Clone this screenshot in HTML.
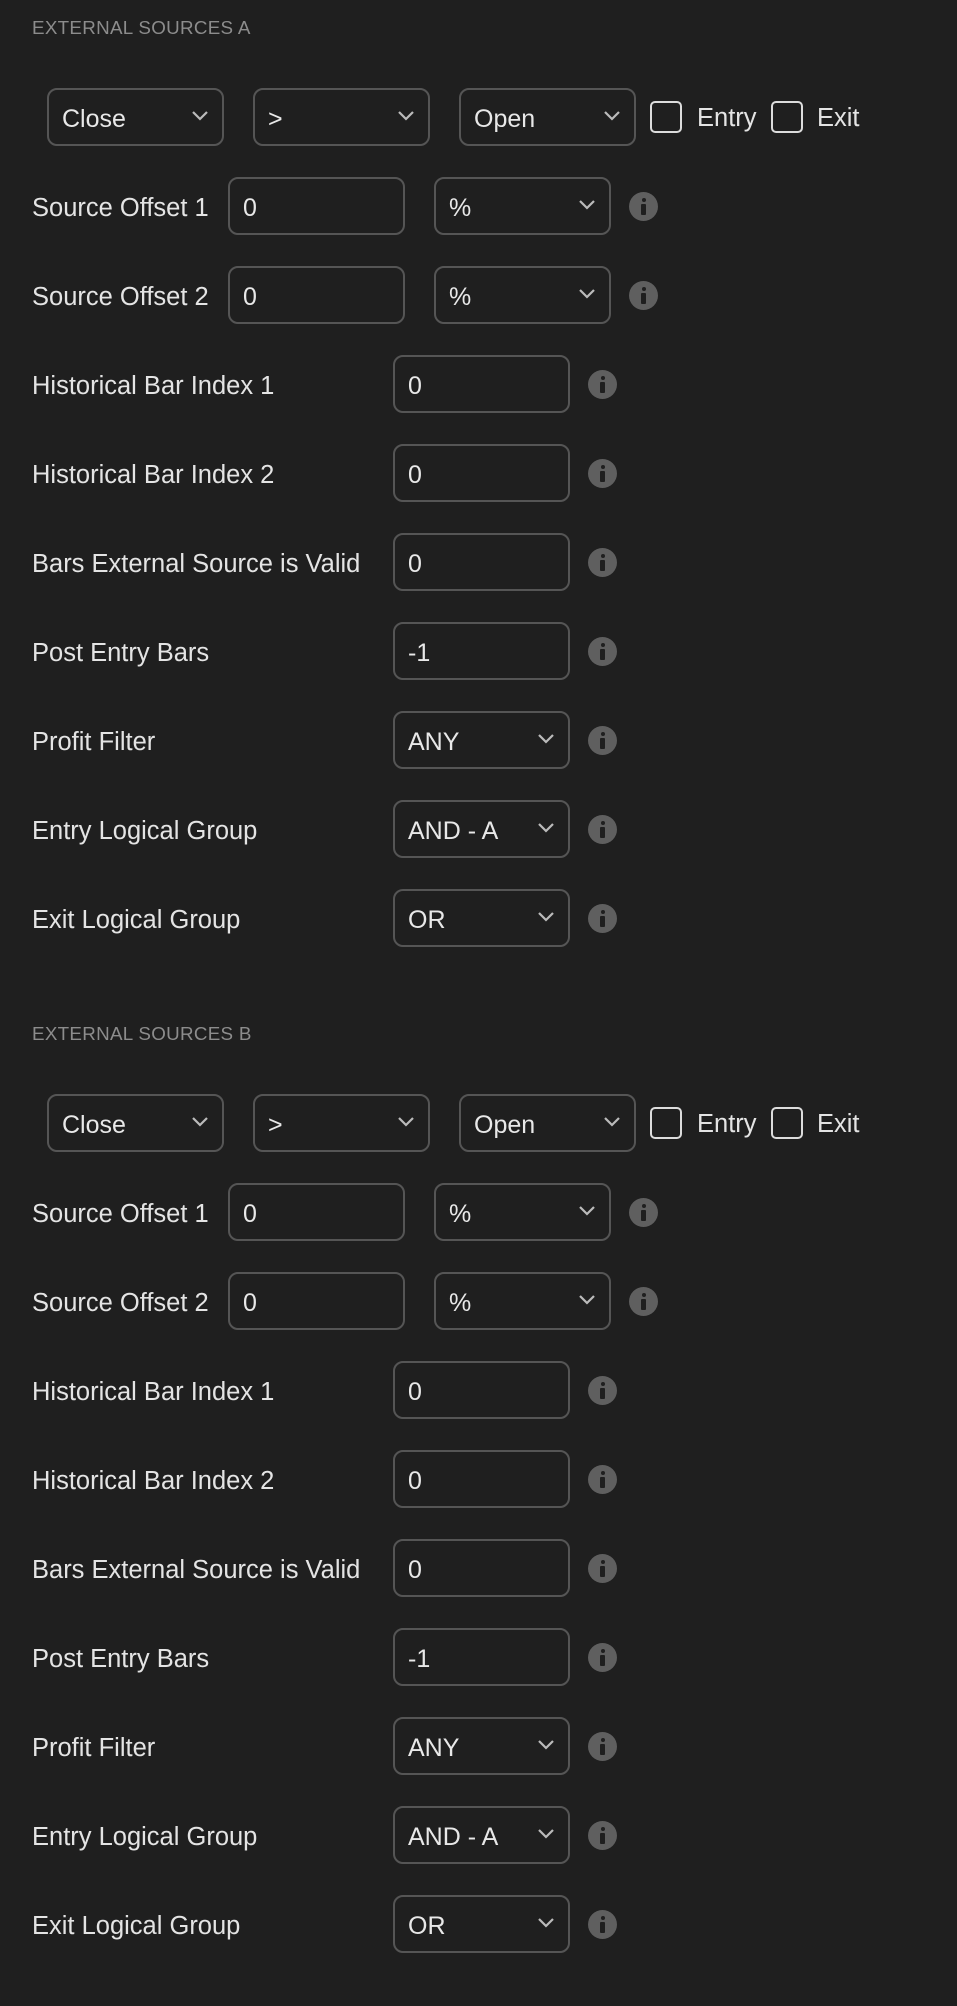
<!DOCTYPE html>
<html><head><meta charset="utf-8"><style>
*{box-sizing:border-box;margin:0;padding:0}
body{width:957px;height:2000px;background:#1f1f1f;font-family:"Liberation Sans",sans-serif;color:#e4e4e4;position:relative;overflow:hidden}
.sec{position:absolute;left:0;width:957px;height:1000px}
.t{position:absolute;left:32px;font-size:18.8px;color:#8c8c8c;letter-spacing:0.3px;line-height:20px}
.b{position:absolute;height:58px;width:177px;border:2px solid #555;border-radius:10px;font-size:25px;line-height:58px;padding-left:13px;color:#e8e8e8}
.b svg{position:absolute;right:14px;top:21px}
.l{position:absolute;left:32px;font-size:25.5px;line-height:30px;color:#e4e4e4;margin-top:2px}
.i{position:absolute;width:29px;height:29px;border-radius:50%;background:#5f5f5f}
.i:before{content:"";position:absolute;left:13px;top:6px;width:4px;height:4px;border-radius:50%;background:#1f1f1f}
.i:after{content:"";position:absolute;left:12px;top:12px;width:5px;height:11px;background:#1f1f1f;border-radius:1px}
.cb{position:absolute;width:32px;height:32px;border:2px solid #dcdcdc;border-radius:5px}
.ct{position:absolute;font-size:25.5px;line-height:30px;color:#e4e4e4;margin-top:1px}
</style></head><body>
<div class="sec" style="top:0">
<div class="t" style="top:18px">EXTERNAL SOURCES A</div>
<div class="b" style="left:47px;top:88px">Close<svg width="16" height="10" viewBox="0 0 16 10"><path d="M1 1l7 7 7-7" stroke="#bbb" stroke-width="2.2" fill="none"/></svg></div>
<div class="b" style="left:253px;top:88px">&gt;<svg width="16" height="10" viewBox="0 0 16 10"><path d="M1 1l7 7 7-7" stroke="#bbb" stroke-width="2.2" fill="none"/></svg></div>
<div class="b" style="left:459px;top:88px">Open<svg width="16" height="10" viewBox="0 0 16 10"><path d="M1 1l7 7 7-7" stroke="#bbb" stroke-width="2.2" fill="none"/></svg></div>
<div class="cb" style="left:650px;top:101px"></div><div class="ct" style="left:697px;top:102px">Entry</div>
<div class="cb" style="left:771px;top:101px"></div><div class="ct" style="left:817px;top:102px">Exit</div>
<div class="l" style="top:191px">Source Offset 1</div>
<div class="b" style="left:228px;top:177px">0</div>
<div class="b" style="left:434px;top:177px">%<svg width="16" height="10" viewBox="0 0 16 10"><path d="M1 1l7 7 7-7" stroke="#bbb" stroke-width="2.2" fill="none"/></svg></div>
<div class="i" style="left:629px;top:192px"></div>
<div class="l" style="top:280px">Source Offset 2</div>
<div class="b" style="left:228px;top:266px">0</div>
<div class="b" style="left:434px;top:266px">%<svg width="16" height="10" viewBox="0 0 16 10"><path d="M1 1l7 7 7-7" stroke="#bbb" stroke-width="2.2" fill="none"/></svg></div>
<div class="i" style="left:629px;top:281px"></div>
<div class="l" style="top:369px">Historical Bar Index 1</div><div class="b" style="left:393px;top:355px">0</div><div class="i" style="left:588px;top:370px"></div>
<div class="l" style="top:458px">Historical Bar Index 2</div><div class="b" style="left:393px;top:444px">0</div><div class="i" style="left:588px;top:459px"></div>
<div class="l" style="top:547px">Bars External Source is Valid</div><div class="b" style="left:393px;top:533px">0</div><div class="i" style="left:588px;top:548px"></div>
<div class="l" style="top:636px">Post Entry Bars</div><div class="b" style="left:393px;top:622px">-1</div><div class="i" style="left:588px;top:637px"></div>
<div class="l" style="top:725px">Profit Filter</div><div class="b" style="left:393px;top:711px">ANY<svg width="16" height="10" viewBox="0 0 16 10"><path d="M1 1l7 7 7-7" stroke="#bbb" stroke-width="2.2" fill="none"/></svg></div><div class="i" style="left:588px;top:726px"></div>
<div class="l" style="top:814px">Entry Logical Group</div><div class="b" style="left:393px;top:800px">AND - A<svg width="16" height="10" viewBox="0 0 16 10"><path d="M1 1l7 7 7-7" stroke="#bbb" stroke-width="2.2" fill="none"/></svg></div><div class="i" style="left:588px;top:815px"></div>
<div class="l" style="top:903px">Exit Logical Group</div><div class="b" style="left:393px;top:889px">OR<svg width="16" height="10" viewBox="0 0 16 10"><path d="M1 1l7 7 7-7" stroke="#bbb" stroke-width="2.2" fill="none"/></svg></div><div class="i" style="left:588px;top:904px"></div>
</div>
<div class="sec" style="top:1006px">
<div class="t" style="top:18px">EXTERNAL SOURCES B</div>
<div class="b" style="left:47px;top:88px">Close<svg width="16" height="10" viewBox="0 0 16 10"><path d="M1 1l7 7 7-7" stroke="#bbb" stroke-width="2.2" fill="none"/></svg></div>
<div class="b" style="left:253px;top:88px">&gt;<svg width="16" height="10" viewBox="0 0 16 10"><path d="M1 1l7 7 7-7" stroke="#bbb" stroke-width="2.2" fill="none"/></svg></div>
<div class="b" style="left:459px;top:88px">Open<svg width="16" height="10" viewBox="0 0 16 10"><path d="M1 1l7 7 7-7" stroke="#bbb" stroke-width="2.2" fill="none"/></svg></div>
<div class="cb" style="left:650px;top:101px"></div><div class="ct" style="left:697px;top:102px">Entry</div>
<div class="cb" style="left:771px;top:101px"></div><div class="ct" style="left:817px;top:102px">Exit</div>
<div class="l" style="top:191px">Source Offset 1</div>
<div class="b" style="left:228px;top:177px">0</div>
<div class="b" style="left:434px;top:177px">%<svg width="16" height="10" viewBox="0 0 16 10"><path d="M1 1l7 7 7-7" stroke="#bbb" stroke-width="2.2" fill="none"/></svg></div>
<div class="i" style="left:629px;top:192px"></div>
<div class="l" style="top:280px">Source Offset 2</div>
<div class="b" style="left:228px;top:266px">0</div>
<div class="b" style="left:434px;top:266px">%<svg width="16" height="10" viewBox="0 0 16 10"><path d="M1 1l7 7 7-7" stroke="#bbb" stroke-width="2.2" fill="none"/></svg></div>
<div class="i" style="left:629px;top:281px"></div>
<div class="l" style="top:369px">Historical Bar Index 1</div><div class="b" style="left:393px;top:355px">0</div><div class="i" style="left:588px;top:370px"></div>
<div class="l" style="top:458px">Historical Bar Index 2</div><div class="b" style="left:393px;top:444px">0</div><div class="i" style="left:588px;top:459px"></div>
<div class="l" style="top:547px">Bars External Source is Valid</div><div class="b" style="left:393px;top:533px">0</div><div class="i" style="left:588px;top:548px"></div>
<div class="l" style="top:636px">Post Entry Bars</div><div class="b" style="left:393px;top:622px">-1</div><div class="i" style="left:588px;top:637px"></div>
<div class="l" style="top:725px">Profit Filter</div><div class="b" style="left:393px;top:711px">ANY<svg width="16" height="10" viewBox="0 0 16 10"><path d="M1 1l7 7 7-7" stroke="#bbb" stroke-width="2.2" fill="none"/></svg></div><div class="i" style="left:588px;top:726px"></div>
<div class="l" style="top:814px">Entry Logical Group</div><div class="b" style="left:393px;top:800px">AND - A<svg width="16" height="10" viewBox="0 0 16 10"><path d="M1 1l7 7 7-7" stroke="#bbb" stroke-width="2.2" fill="none"/></svg></div><div class="i" style="left:588px;top:815px"></div>
<div class="l" style="top:903px">Exit Logical Group</div><div class="b" style="left:393px;top:889px">OR<svg width="16" height="10" viewBox="0 0 16 10"><path d="M1 1l7 7 7-7" stroke="#bbb" stroke-width="2.2" fill="none"/></svg></div><div class="i" style="left:588px;top:904px"></div>
</div>
</body></html>
